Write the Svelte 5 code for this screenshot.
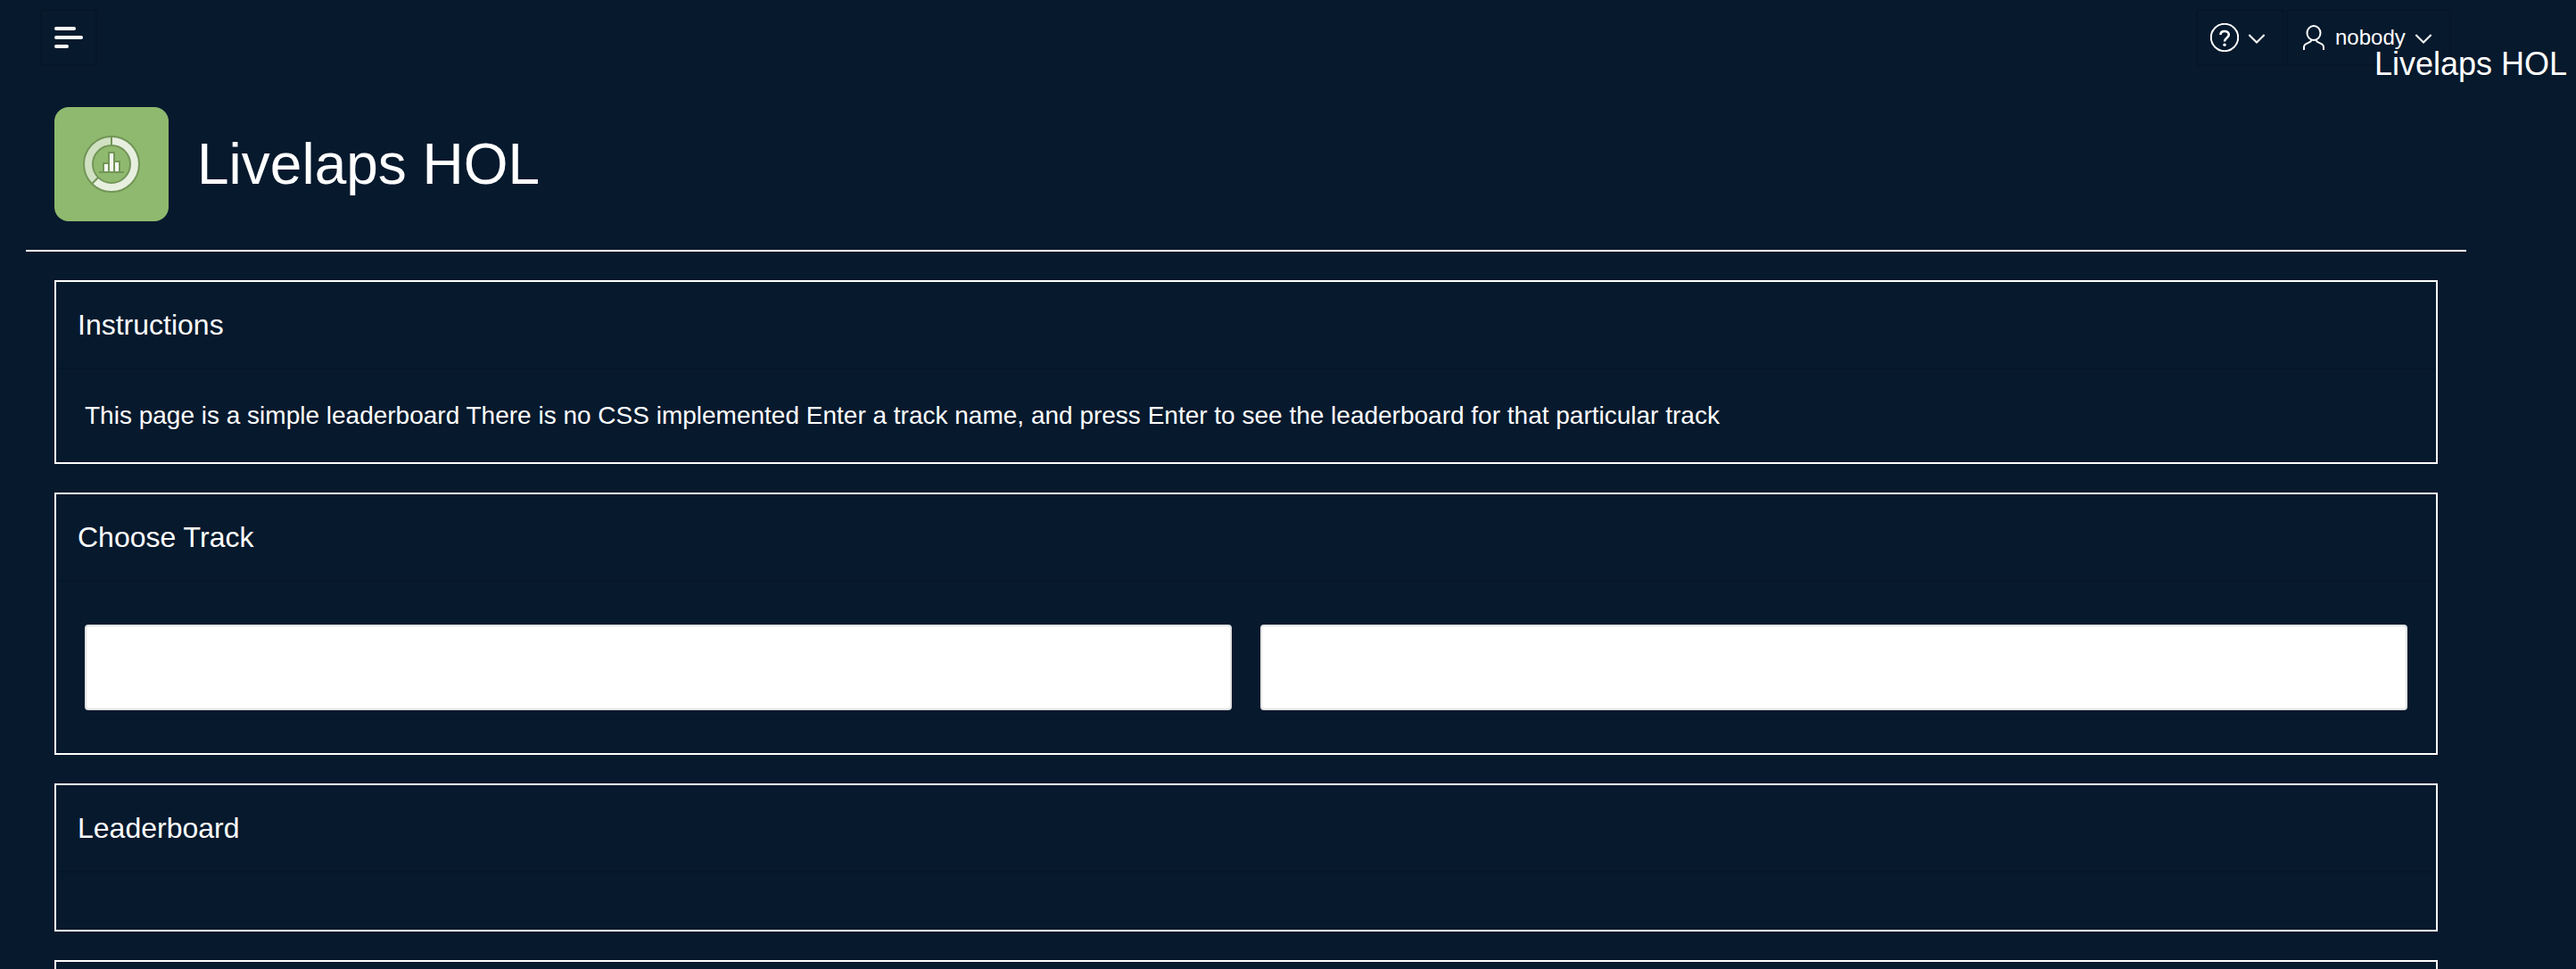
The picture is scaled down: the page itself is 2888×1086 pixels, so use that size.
<script>
  const tracks = $state(['', '']);
</script>

{#snippet chevron()}
  <svg class="chevron" width="20" height="14" viewBox="0 0 20 14">
    <path d="M1.400 4 10 12.500l8.600-8.500" />
  </svg>
{/snippet}

<div class="page">
  <header class="topbar">
    <button class="nav-button menu" aria-label="Menu">
      <svg width="32" height="24" viewBox="0 0 32 24">
        <rect width="24" height="4" rx="2" />
        <rect y="10" width="32" height="4" rx="2" />
        <rect y="20" width="16" height="4" rx="2" />
      </svg>
    </button>
    <nav class="actions">
      <button class="nav-button help" aria-label="Help">
        <svg width="32" height="32" viewBox="0 0 32 32">
          <circle cx="16" cy="16" r="15.200" />
          <path class="thick" d="M11.500 13C11.500 10.500 13.400 9 16 9s4.800 1.600 4.800 4c0 3.300-4.800 3.700-4.800 7.500" />
          <circle class="dot" cx="16" cy="24.200" r="1.700" />
        </svg>
        {@render chevron()}
      </button>
      <button class="nav-button user">
        <svg width="24" height="28" viewBox="0 0 24 28">
          <ellipse cx="12" cy="9" rx="7.500" ry="8" />
          <path d="M1 28v-3c0-2.500 1.500-3.700 4-4.600C7.700 19.400 9.300 18.600 9.500 16.500M14.500 16.500c.2 2.100 1.800 2.900 4.500 3.900C21.500 21.300 23 22.500 23 25v3" />
        </svg>
        <span>nobody</span>
        {@render chevron()}
      </button>
    </nav>
    <span class="corner-title">Livelaps HOL</span>
  </header>

  <main>
    <div class="hero">
      <div class="app-icon">
        <svg width="64" height="64" viewBox="0 0 64 64">
          <circle class="ring" cx="32" cy="32" r="26" />
          <path class="ring-soft" d="M32 6A26 26 0 0 0 13.600 50.400" />
          <circle class="edge" cx="32" cy="32" r="31" />
          <circle class="edge" cx="32" cy="32" r="21" />
          <path class="edge" d="M32 1v10M10.500 53.500l6.500-6.500" />
          <path class="bar-edge" d="M22 40V30h6V18h8v10h6v12h4v2H18v-2z" />
          <path class="bars" d="M24 32h4v8h-4zM30 20h4v20h-4zM36 30h4v10h-4z" />
        </svg>
      </div>
      <h1>Livelaps HOL</h1>
    </div>

    <div class="regions">
      <section>
        <h2>Instructions</h2>
        <div class="body text">
          This page is a simple leaderboard There is no CSS implemented Enter a track name, and press Enter to see the leaderboard for that particular track
        </div>
      </section>
      <section>
        <h2>Choose Track</h2>
        <div class="body fields">
          <input aria-label="Track" bind:value={tracks[0]} />
          <input aria-label="Track name" bind:value={tracks[1]} />
        </div>
      </section>
      <section>
        <h2>Leaderboard</h2>
        <div class="body empty"></div>
      </section>
      <section>
        <div class="body empty"></div>
      </section>
    </div>
  </main>
</div>

<style>
  :global(body) {
    background: #06192d;
    overflow: hidden;
  }
  .page {
    box-sizing: border-box;
    height: 1086px;
    overflow: hidden;
    background: #06192d;
    color: #fff;
    font-family: "Liberation Sans", Arial, sans-serif;
  }
  .topbar {
    position: relative;
    box-sizing: border-box;
    height: 84px;
    padding: 10px 140px 10px 45px;
    display: flex;
    justify-content: space-between;
    align-items: center;
  }
  .actions {
    display: flex;
    gap: 2px;
  }
  .nav-button {
    box-sizing: border-box;
    height: 64px;
    display: flex;
    align-items: center;
    padding: 0 14px;
    border: 2px solid #051628;
    border-radius: 4px;
    background: none;
    color: inherit;
    font: 24px/32px "Liberation Sans", Arial, sans-serif;
  }
  .menu svg {
    fill: #fff;
  }
  .help {
    width: 99px;
    gap: 10px;
  }
  .user {
    width: 185px;
    padding-left: 17px;
  }
  .user span {
    margin: 0 10px 0 12px;
  }
  .actions svg {
    flex: none;
    fill: none;
    stroke: #fff;
    stroke-width: 2;
  }
  .actions .thick {
    stroke-width: 2.6;
  }
  .actions .dot {
    fill: #fff;
    stroke: none;
  }
  .corner-title {
    position: absolute;
    top: 51px;
    right: 10px;
    font-size: 36px;
    line-height: 42px;
    white-space: nowrap;
  }
  main {
    width: 2736px;
    margin-left: 29px;
  }
  .hero {
    display: flex;
    align-items: center;
    gap: 32px;
    padding: 36px 32px 32px;
    border-bottom: 2px solid #fff;
  }
  .app-icon {
    width: 128px;
    height: 128px;
    border-radius: 16px;
    background: #8fb96e;
    display: flex;
    align-items: center;
    justify-content: center;
  }
  .app-icon svg {
    fill: none;
  }
  .ring {
    stroke: #e7efdf;
    stroke-width: 10;
  }
  .ring-soft {
    stroke: #d0e1c2;
    stroke-width: 10;
  }
  .edge {
    stroke: #729558;
    stroke-width: 2;
  }
  .bar-edge {
    fill: #729558;
  }
  .bars {
    fill: #f4f8f1;
  }
  h1 {
    margin: 0;
    font-size: 64px;
    line-height: 80px;
    font-weight: 400;
  }
  .regions {
    display: flex;
    flex-direction: column;
    gap: 32px;
    padding: 32px;
  }
  section {
    border: 2px solid #fff;
  }
  h2 {
    margin: 0;
    padding: 28px 24px;
    font-size: 32px;
    line-height: 40px;
    font-weight: 400;
    border-bottom: 2px solid #05162b;
  }
  .text {
    padding: 32px;
    font-size: 28px;
    line-height: 40px;
  }
  .fields {
    display: grid;
    grid-template-columns: 1fr 1fr;
    gap: 32px;
    padding: 48px 32px;
  }
  input {
    box-sizing: border-box;
    width: 100%;
    height: 96px;
    padding: 0 16px;
    border: 2px solid #e2e2e2;
    border-radius: 4px;
    background: #fff;
    font: inherit;
    font-size: 28px;
  }
  .empty {
    height: 64px;
  }
</style>
